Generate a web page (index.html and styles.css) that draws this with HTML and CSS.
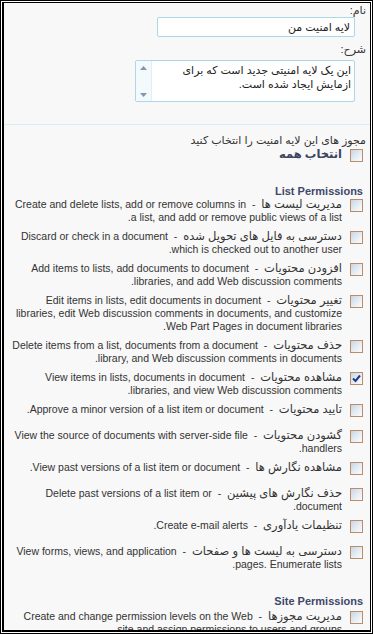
FILE: index.html
```html
<!DOCTYPE html>
<html lang="fa">
<head>
<meta charset="utf-8">
<title>لایه امنیت</title>
<link rel="stylesheet" href="styles.css">
</head>
<body>
<div class="frame">
  <div class="inner">
    <div class="page" dir="rtl">
      <div class="label">نام:</div>
      <div class="input">لایه امنیت من</div>
      <div class="label label2">شرح:</div>
      <div class="textarea">
        <div class="ta-text">این یک لایه امنیتی جدید است که برای<br>ازمایش ایجاد شده است.</div>
        <div class="scroll">
          <svg width="7" height="4" viewBox="0 0 7 4"><path d="M0 4 L3.5 0 L7 4 Z" fill="#7f98b0"/></svg>
          <svg width="7" height="4" viewBox="0 0 7 4"><path d="M0 0 L3.5 4 L7 0 Z" fill="#7f98b0"/></svg>
        </div>
      </div>
      <div class="sep"></div>
      <div class="perm-head">مجوز های این لایه امنیت را انتخاب کنید</div>
      <div class="item selectall"><span class="cb"></span><span class="txt bold"><span class="fa">انتخاب همه</span></span></div>

      <h3 class="group">List Permissions</h3>
      <div class="item"><span class="cb"></span><span class="txt"><span class="fa">مدیریت لیست ها</span> &nbsp;-&nbsp; Create and delete lists, add or remove columns in<br>a list, and add or remove public views of a list.</span></div>
      <div class="item"><span class="cb"></span><span class="txt"><span class="fa">دسترسی به فایل های تحویل شده</span> &nbsp;-&nbsp; Discard or check in a document<br>which is checked out to another user.</span></div>
      <div class="item"><span class="cb"></span><span class="txt"><span class="fa">افزودن محتویات</span> &nbsp;-&nbsp; Add items to lists, add documents to document<br>libraries, and add Web discussion comments.</span></div>
      <div class="item"><span class="cb"></span><span class="txt"><span class="fa">تغییر محتویات</span> &nbsp;-&nbsp; Edit items in lists, edit documents in document<br>libraries, edit Web discussion comments in documents, and customize<br>Web Part Pages in document libraries.</span></div>
      <div class="item"><span class="cb"></span><span class="txt"><span class="fa">حذف محتویات</span> &nbsp;-&nbsp; Delete items from a list, documents from a document<br>library, and Web discussion comments in documents.</span></div>
      <div class="item"><span class="cb checked"><svg width="9" height="9" viewBox="0 0 9 9"><path d="M1 4.5 L3.5 7 L8 1.5" fill="none" stroke="#21398a" stroke-width="2"/></svg></span><span class="txt"><span class="fa">مشاهده محتویات</span> &nbsp;-&nbsp; View items in lists, documents in document<br>libraries, and view Web discussion comments.</span></div>
      <div class="item"><span class="cb"></span><span class="txt"><span class="fa">تایید محتویات</span> &nbsp;-&nbsp; Approve a minor version of a list item or document.</span></div>
      <div class="item"><span class="cb"></span><span class="txt"><span class="fa">گشودن محتویات</span> &nbsp;-&nbsp; View the source of documents with server-side file<br>handlers.</span></div>
      <div class="item"><span class="cb"></span><span class="txt"><span class="fa">مشاهده نگارش ها</span> &nbsp;-&nbsp; View past versions of a list item or document.</span></div>
      <div class="item"><span class="cb"></span><span class="txt"><span class="fa">حذف نگارش های پیشین</span> &nbsp;-&nbsp; Delete past versions of a list item or<br>document.</span></div>
      <div class="item"><span class="cb"></span><span class="txt"><span class="fa">تنظیمات یادآوری</span> &nbsp;-&nbsp; Create e-mail alerts.</span></div>
      <div class="item"><span class="cb"></span><span class="txt"><span class="fa">دسترسی به لیست ها و صفحات</span> &nbsp;-&nbsp; View forms, views, and application<br>pages. Enumerate lists.</span></div>

      <h3 class="group group2">Site Permissions</h3>
      <div class="item"><span class="cb"></span><span class="txt"><span class="fa">مدیریت مجوزها</span> &nbsp;-&nbsp; Create and change permission levels on the Web<br>site and assign permissions to users and groups.</span></div>
    </div>
  </div>
</div>
</body>
</html>
```

FILE: styles.css
```css
html, body {
  margin: 0;
  padding: 0;
  overflow: hidden;
}

body {
  font-family: "Liberation Sans", "DejaVu Sans", sans-serif;
  font-size: 11px;
  color: #333;
}

.frame {
  width: 373px;
  height: 634px;
  box-sizing: border-box;
  border: 1px solid #000;
  padding: 1px;
  background: #fff;
}

.inner {
  height: 100%;
  box-sizing: border-box;
  border-style: solid;
  border-color: #000;
  border-width: 1px 1px 2px 2px;
  background: #f8f8f8;
  overflow: hidden;
}

.page {
  padding: 0 4px 0 2px;
}

.label {
  line-height: 14px;
  height: 14px;
  color: #333;
}

.label2 {
  margin-top: 5px;
}

.input {
  width: 198px;
  height: 20px;
  box-sizing: border-box;
  margin-right: 11px;
  border: 1px solid #a9d8e6;
  border-radius: 2px;
  background: #fff;
  line-height: 18px;
  padding: 0 4px;
  color: #222;
}

.textarea {
  width: 220px;
  height: 42px;
  box-sizing: border-box;
  margin-top: 4px;
  margin-right: 11px;
  border: 1px solid #a9d8e6;
  border-radius: 2px;
  background: #fff;
  display: flex;
}

.ta-text {
  flex: 1;
  padding: 2px 3px;
  line-height: 14px;
  color: #222;
}

.scroll {
  width: 16px;
  border-right: 1px solid #dfeff4;
  background: #f4f9fb;
  display: flex;
  flex-direction: column;
  justify-content: space-between;
  align-items: center;
  padding: 5px 0 4px;
  box-sizing: border-box;
}

.scroll svg {
  display: block;
}

.sep {
  height: 1px;
  background: #d4eef2;
  margin: 22px -4px 0 -2px;
}

.perm-head {
  margin-top: 8px;
  line-height: 14px;
}

.item {
  display: flex;
  align-items: flex-start;
  padding-bottom: 6px;
}

.selectall {
  padding-bottom: 0;
  margin-top: 1px;
}

.cb {
  flex: none;
  width: 13px;
  height: 13px;
  box-sizing: border-box;
  margin: 1px 3px 6px 8px;
  border: 1px solid #b98d69;
  background: linear-gradient(135deg, #c8d6e4 0%, #e6edf3 55%, #fbfcfd 100%);
  display: flex;
  align-items: center;
  justify-content: center;
}

.txt {
  font-size: 10.5px;
  line-height: 13px;
  white-space: nowrap;
}

.fa {
  font-size: 11.5px;
}

.bold {
  font-weight: bold;
  color: #3c4462;
}

.group {
  margin: 16px 3px 0 0;
  font-size: 11px;
  font-weight: bold;
  line-height: 14px;
  color: #40486a;
}

.group2 {
  margin-top: 17px;
  margin-bottom: 2px;
}
```
